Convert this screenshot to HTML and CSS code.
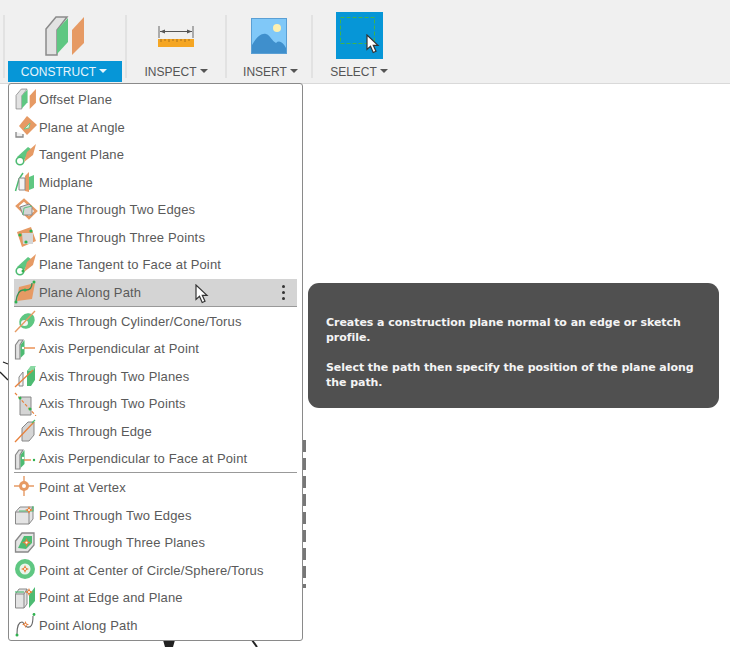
FILE: index.html
```html
<!DOCTYPE html>
<html lang="en">
<head>
  <meta charset="UTF-8">
  <meta name="viewport" content="width=device-width, initial-scale=1.0">
  <title>Construct menu</title>
  <link rel="stylesheet" href="styles.css">
</head>
<body>
  <svg class="defs" width="0" height="0">
    <symbol id="cursor" viewBox="0 0 14 20">
      <path d="M1 1V15.500L4.500 12.300L7.200 18.500L10 17.300L7.300 11.300H12Z" fill="#fff" stroke="#333" stroke-width="1.200"/>
    </symbol>
    <symbol id="pt" viewBox="0 0 8 8">
      <path d="M4 0L5.200 2.800L8 4L5.200 5.200L4 8L2.800 5.200L0 4L2.800 2.800Z" fill="#e8813c"/>
      <circle cx="4" cy="4" r="1" fill="#fff"/>
    </symbol>
    <symbol id="planes" viewBox="0 0 40 42">
      <path d="M1 14L11 2H22L12 15V40H1Z" fill="#e2e2e2" stroke="#8a8a8a" stroke-width="1.500"/>
      <path d="M12 39V15L23 3V27Z" fill="#5fc782"/>
      <path d="M27 40V15L39 2V28Z" fill="#e69a64"/>
    </symbol>
    <symbol id="tangent" viewBox="0 0 24 24">
      <path d="M3 14L14 4L17 6L9 19Z" fill="#5fc782"/>
      <circle cx="6" cy="18" r="3.800" fill="#fff" stroke="#4dbb72" stroke-width="1.600"/>
      <path d="M10 19L13 9L22 1L19 12Z" fill="#e69a64"/>
    </symbol>
    <symbol id="perp" viewBox="0 0 24 24">
      <path d="M1.500 8L5 3H9L6 8V22H1.500Z" fill="#e2e2e2" stroke="#888" stroke-width="1.200"/>
      <path d="M6.500 21V8L10.500 3V17Z" fill="#4dbb72"/>
      <circle cx="9" cy="11" r="1.200" fill="#fff"/>
    </symbol>
  </svg>

  <header class="toolbar">
    <span class="sep"></span>
    <div class="tool tool-construct">
      <div class="tool-icon">
        <svg width="40" height="42"><use href="#planes"/></svg>
      </div>
      <div class="tool-label active">CONSTRUCT<i class="caret"></i></div>
    </div>
    <span class="sep"></span>
    <div class="tool tool-inspect">
      <div class="tool-icon">
        <svg width="38" height="22" viewBox="0 0 38 22">
          <path d="M2 1V13M36 1V13" stroke="#666" stroke-width="1"/>
          <path d="M3 6.500H35" stroke="#555" stroke-width="1"/>
          <path d="M3 6.500L8 4.500V8.500ZM35 6.500L30 4.500V8.500Z" fill="#555"/>
          <rect x="1" y="14" width="36" height="8" fill="#f5a623"/>
          <path d="M4 14V17M8 14V16M12 14V17M16 14V16M20 14V17M24 14V16M28 14V17M32 14V16" stroke="#a9711a" stroke-width="1"/>
        </svg>
      </div>
      <div class="tool-label">INSPECT<i class="caret"></i></div>
    </div>
    <span class="sep"></span>
    <div class="tool tool-insert">
      <div class="tool-icon">
        <svg width="36" height="36" viewBox="0 0 36 36">
          <rect x="0.500" y="0.500" width="35" height="35" fill="#80c8f8" stroke="#5a9fd4"/>
          <circle cx="26" cy="10" r="4" fill="#fdf0b0"/>
          <path d="M1 27C6 18 11 15 15 16C19 17 21 23 25 25C28 22 32 24 35 30V35H1Z" fill="#3f8fcc"/>
        </svg>
      </div>
      <div class="tool-label">INSERT<i class="caret"></i></div>
    </div>
    <span class="sep"></span>
    <div class="tool tool-select">
      <div class="tool-icon">
        <svg width="47" height="47" viewBox="0 0 47 47">
          <rect width="47" height="47" fill="#0696d7"/>
          <rect x="4.500" y="5.500" width="34" height="26" fill="none" stroke="#3fb34f" stroke-dasharray="4 2"/>
          <use href="#cursor" x="30" y="22" width="14" height="20"/>
        </svg>
      </div>
      <div class="tool-label">SELECT<i class="caret"></i></div>
    </div>
  </header>

  <!-- sketch geometry behind the menu -->
  <svg class="sketch" width="730" height="647">
    <path d="M3 362L8 364M0 372L8 380" stroke="#222" stroke-width="1.300" fill="none"/>
    <path d="M304.500 440V588" stroke="#777" stroke-width="3" stroke-dasharray="12 6" fill="none"/>
    <path d="M163 640H175L173 647H165Z" fill="#222"/>
    <path d="M252 640L257 647" stroke="#222" stroke-width="2" fill="none"/>
  </svg>

  <nav class="menu">
    <ul class="menu-group">
      <li class="menu-item">
        <svg class="ico" viewBox="0 0 24 24"><use href="#planes" x="1" y="0" width="22" height="22"/></svg>
        Offset Plane
      </li>
      <li class="menu-item">
        <svg class="ico" viewBox="0 0 24 24">
          <path d="M2 17V22H9V19" fill="#eee" stroke="#888" stroke-width="1.300"/>
          <path d="M13 1L23 10L13 20L5 11Z" fill="#e69a64"/>
          <path d="M10 14L16 8L15 13Z" fill="#d7f0dd" stroke="#5fc782" stroke-width=".8"/>
        </svg>
        Plane at Angle
      </li>
      <li class="menu-item">
        <svg class="ico" viewBox="0 0 24 24"><use href="#tangent" width="24" height="24"/></svg>
        Tangent Plane
      </li>
      <li class="menu-item">
        <svg class="ico" viewBox="0 0 24 24">
          <path d="M1.500 21L5 9L9 3" fill="none" stroke="#4dbb72" stroke-width="1.500"/>
          <path d="M11 6L15 2V22L11 21Z" fill="#e69a64"/>
          <path d="M5 20V8H11V20Z" fill="#f3f3f3" stroke="#888"/>
          <path d="M15 7L20 5V18L15 20Z" fill="#5fc782"/>
        </svg>
        Midplane
      </li>
      <li class="menu-item">
        <svg class="ico" viewBox="0 0 24 24">
          <path d="M10 2L22 13L15 20L3 8Z" fill="none" stroke="#e69a64" stroke-width="2.500"/>
          <path d="M6 9L15 6L18 9V17H9Z" fill="#d5d5d5" stroke="#888"/>
          <path d="M9 17L10 10L18 8" fill="none" stroke="#5fc782"/>
        </svg>
        Plane Through Two Edges
      </li>
      <li class="menu-item">
        <svg class="ico" viewBox="0 0 24 24">
          <path d="M3 7L17 2L22 16L8 22Z" fill="#e69a64"/>
          <path d="M8 8H19V19H9Z" fill="#d5d5d5"/>
          <circle cx="6" cy="10" r="1.600" fill="#2fb24f"/>
          <circle cx="17" cy="6" r="1.600" fill="#2fb24f"/>
          <circle cx="12" cy="17" r="1.600" fill="#2fb24f"/>
        </svg>
        Plane Through Three Points
      </li>
      <li class="menu-item">
        <svg class="ico" viewBox="0 0 24 24">
          <use href="#tangent" width="24" height="24"/>
          <circle cx="9" cy="18" r="1.500" fill="#2fb24f"/>
        </svg>
        Plane Tangent to Face at Point
      </li>
      <li class="menu-item is-hover">
        <svg class="ico" viewBox="0 0 24 24">
          <path d="M5 7L21 3L18 19L3 21Z" fill="#e69a64"/>
          <path d="M2 21C3 15 5 10 9 10H12C15 10 18 9 18 3" fill="none" stroke="#3a8f55" stroke-width="1.300"/>
          <circle cx="11" cy="10" r="1.500" fill="#2fb24f"/>
          <circle cx="2" cy="22" r="1.500" fill="#2fb24f"/>
          <circle cx="20" cy="2" r="1.500" fill="#2fb24f"/>
        </svg>
        Plane Along Path
        <svg class="pointer" width="14" height="20"><use href="#cursor"/></svg>
        <span class="kebab"><i></i><i></i><i></i></span>
      </li>
    </ul>
    <ul class="menu-group group-axis">
      <li class="menu-item">
        <svg class="ico" viewBox="0 0 24 24">
          <ellipse cx="13" cy="12" rx="8.500" ry="7" transform="rotate(-45 13 12)" fill="#5fc782"/>
          <ellipse cx="10.500" cy="14" rx="3.500" ry="3" fill="#f5f5f5"/>
          <path d="M1 23L21 2" stroke="#e69a64" stroke-width="1.400"/>
        </svg>
        Axis Through Cylinder/Cone/Torus
      </li>
      <li class="menu-item">
        <svg class="ico" viewBox="0 0 24 24">
          <use href="#perp" width="24" height="24"/>
          <path d="M10 11H21" stroke="#e8813c" stroke-width="1.300"/>
        </svg>
        Axis Perpendicular at Point
      </li>
      <li class="menu-item">
        <svg class="ico" viewBox="0 0 24 24">
          <path d="M5 13L9 8V22H5Z" fill="#f3f3f3" stroke="#888"/>
          <path d="M13 7L17 2H21V16L17 22H13Z" fill="#4dbb72"/>
          <path d="M13 7L17 2H22L19 7Z" fill="#8ad9a3"/>
          <path d="M1 23L19 6" stroke="#e8813c" stroke-width="1.300"/>
        </svg>
        Axis Through Two Planes
      </li>
      <li class="menu-item">
        <svg class="ico" viewBox="0 0 24 24">
          <path d="M6 5H17V23H6Z" fill="#d5d5d5" stroke="#888"/>
          <path d="M1 1L22 24" stroke="#e8813c" stroke-width="1.200" stroke-dasharray="3 2"/>
          <circle cx="6" cy="6" r="1.500" fill="#2fb24f"/>
          <circle cx="16" cy="17" r="1.500" fill="#2fb24f"/>
        </svg>
        Axis Through Two Points
      </li>
      <li class="menu-item">
        <svg class="ico" viewBox="0 0 24 24">
          <path d="M8 9L14 3H20V16L15 22H8Z" fill="#d5d5d5" stroke="#888"/>
          <path d="M1 23L20 3" stroke="#e8813c" stroke-width="1.300"/>
          <path d="M18 4L21 1" stroke="#4dbb72" stroke-width="1.300"/>
        </svg>
        Axis Through Edge
      </li>
      <li class="menu-item">
        <svg class="ico" viewBox="0 0 24 24">
          <use href="#perp" width="24" height="24"/>
          <path d="M10 13H17" stroke="#e8813c" stroke-width="1.300"/>
          <circle cx="20" cy="13" r="1.200" fill="#2fb24f"/>
        </svg>
        Axis Perpendicular to Face at Point
      </li>
    </ul>
    <ul class="menu-group group-point">
      <li class="menu-item">
        <svg class="ico" viewBox="0 0 24 24">
          <path d="M10 0V20M0 10H20" stroke="#e69a64" stroke-width="1.400"/>
          <circle cx="10" cy="10" r="5" fill="#e69a64"/>
          <circle cx="10" cy="10" r="2" fill="#fff"/>
        </svg>
        Point at Vertex
      </li>
      <li class="menu-item">
        <svg class="ico" viewBox="0 0 24 24">
          <path d="M1.500 9L6 4H19V16L15 21H1.500Z" fill="#e4e4e4" stroke="#888"/>
          <path d="M1.500 9H15V21M15 9L19 4" fill="none" stroke="#888"/>
          <path d="M5 8L19 8L19 3" fill="none" stroke="#4dbb72" stroke-width="1.200"/>
          <use href="#pt" x="11" y="3" width="8" height="8"/>
        </svg>
        Point Through Two Edges
      </li>
      <li class="menu-item">
        <svg class="ico" viewBox="0 0 24 24">
          <path d="M1.500 10L8 2H20V14L14 21H1.500Z" fill="#e4e4e4" stroke="#888" stroke-width="1.300"/>
          <path d="M4 17L10 5H18V12L12 18Z" fill="#4dbb72"/>
          <use href="#pt" x="8" y="7" width="9" height="9"/>
        </svg>
        Point Through Three Planes
      </li>
      <li class="menu-item">
        <svg class="ico" viewBox="0 0 24 24">
          <circle cx="11" cy="11" r="10" fill="#5fc782"/>
          <circle cx="11" cy="11" r="5.500" fill="#e8f5ec"/>
          <use href="#pt" x="7" y="7" width="8" height="8"/>
        </svg>
        Point at Center of Circle/Sphere/Torus
      </li>
      <li class="menu-item">
        <svg class="ico" viewBox="0 0 24 24">
          <path d="M1.500 8L5 3H13V18L10 22H1.500Z" fill="#e4e4e4" stroke="#888"/>
          <path d="M1.500 8H10V22M10 8L13 3" fill="none" stroke="#888"/>
          <path d="M1 6H10" stroke="#4dbb72" stroke-width="1.200"/>
          <path d="M15 9L21 1V15L15 22Z" fill="#4dbb72"/>
          <use href="#pt" x="11" y="2" width="8" height="8"/>
        </svg>
        Point at Edge and Plane
      </li>
      <li class="menu-item">
        <svg class="ico" viewBox="0 0 24 24">
          <path d="M3 21C3 13 5 9 8 9C10 9 10 13 13 14C17 15 19 12 19 3" fill="none" stroke="#666" stroke-width="1.100"/>
          <use href="#pt" x="8" y="8" width="7" height="7"/>
          <circle cx="3" cy="22" r="1.500" fill="#2fb24f"/>
          <circle cx="20" cy="1.500" r="1.400" fill="#2fb24f"/>
        </svg>
        Point Along Path
      </li>
    </ul>
  </nav>

  <aside class="tooltip">
    <p>Creates a construction plane normal to an edge or sketch profile.</p>
    <p>Select the path then specify the position of the plane along the path.</p>
  </aside>
</body>
</html>
```

FILE: styles.css
```css
*{margin:0;padding:0;box-sizing:border-box;}
body{position:relative;width:730px;height:647px;overflow:hidden;background:#fff;font-family:"Liberation Sans",Arial,sans-serif;color:#555;}
.defs{position:absolute;}
.toolbar{display:flex;align-items:flex-start;height:84px;padding-left:3px;background:#f0f0f0;border-bottom:1px solid #d9d9d9;}
.sep{flex:none;width:2px;height:63px;margin-top:15px;background:#e2e2e2;}
.tool{flex:none;display:flex;flex-direction:column;align-items:center;padding-top:12px;}
.tool-construct{width:120px;}
.tool-inspect{width:98px;}
.tool-insert{width:84px;}
.tool-select{width:92px;}
.tool-icon{display:flex;align-items:center;justify-content:center;height:47px;margin-bottom:2px;}
.tool-icon svg{display:block;filter:blur(.3px);}
.tool-label{display:flex;align-items:center;justify-content:center;gap:3px;height:21px;font-size:12px;color:#555;}
.tool-label.active{width:114px;padding-right:2px;background:#0696d7;color:#e6f5fc;}
.tool-insert .tool-label{padding-left:3px;}
.caret{width:0;height:0;margin-top:-2px;border-left:4px solid transparent;border-right:4px solid transparent;border-top:4px solid currentColor;}
.sketch{position:absolute;left:0;top:0;}
.menu{position:absolute;left:8px;top:83px;width:295px;height:558px;padding:2px 5px;background:#fff;border:1px solid #8a8a8a;border-radius:3px;}
.menu-group{list-style:none;border-bottom:1px solid #999;}
.menu-group:last-child{border-bottom:0;}
.group-axis{padding-top:.25px;}
.group-point{padding-top:.5px;}
.menu-item{position:relative;display:flex;align-items:center;gap:1px;height:27.5px;font-size:13px;letter-spacing:.15px;color:#5a5a5a;white-space:nowrap;}
.menu-item.is-hover{background:#d4d4d4;}
.ico{flex:none;width:24px;height:24px;filter:blur(.3px);}
.pointer{position:absolute;left:181px;top:5px;}
.kebab{display:flex;flex-direction:column;gap:3px;margin-left:auto;margin-right:12px;}
.kebab i{width:3px;height:3px;border-radius:50%;background:#333;}
.tooltip{position:absolute;left:308px;top:283px;width:411px;height:125px;padding:32px 18px 0;background:#505050;border-radius:11px;font-family:"DejaVu Sans",sans-serif;font-size:11px;font-weight:700;letter-spacing:-.05px;line-height:15px;color:#f4f4f4;}
.tooltip p+p{margin-top:15px;}
```
